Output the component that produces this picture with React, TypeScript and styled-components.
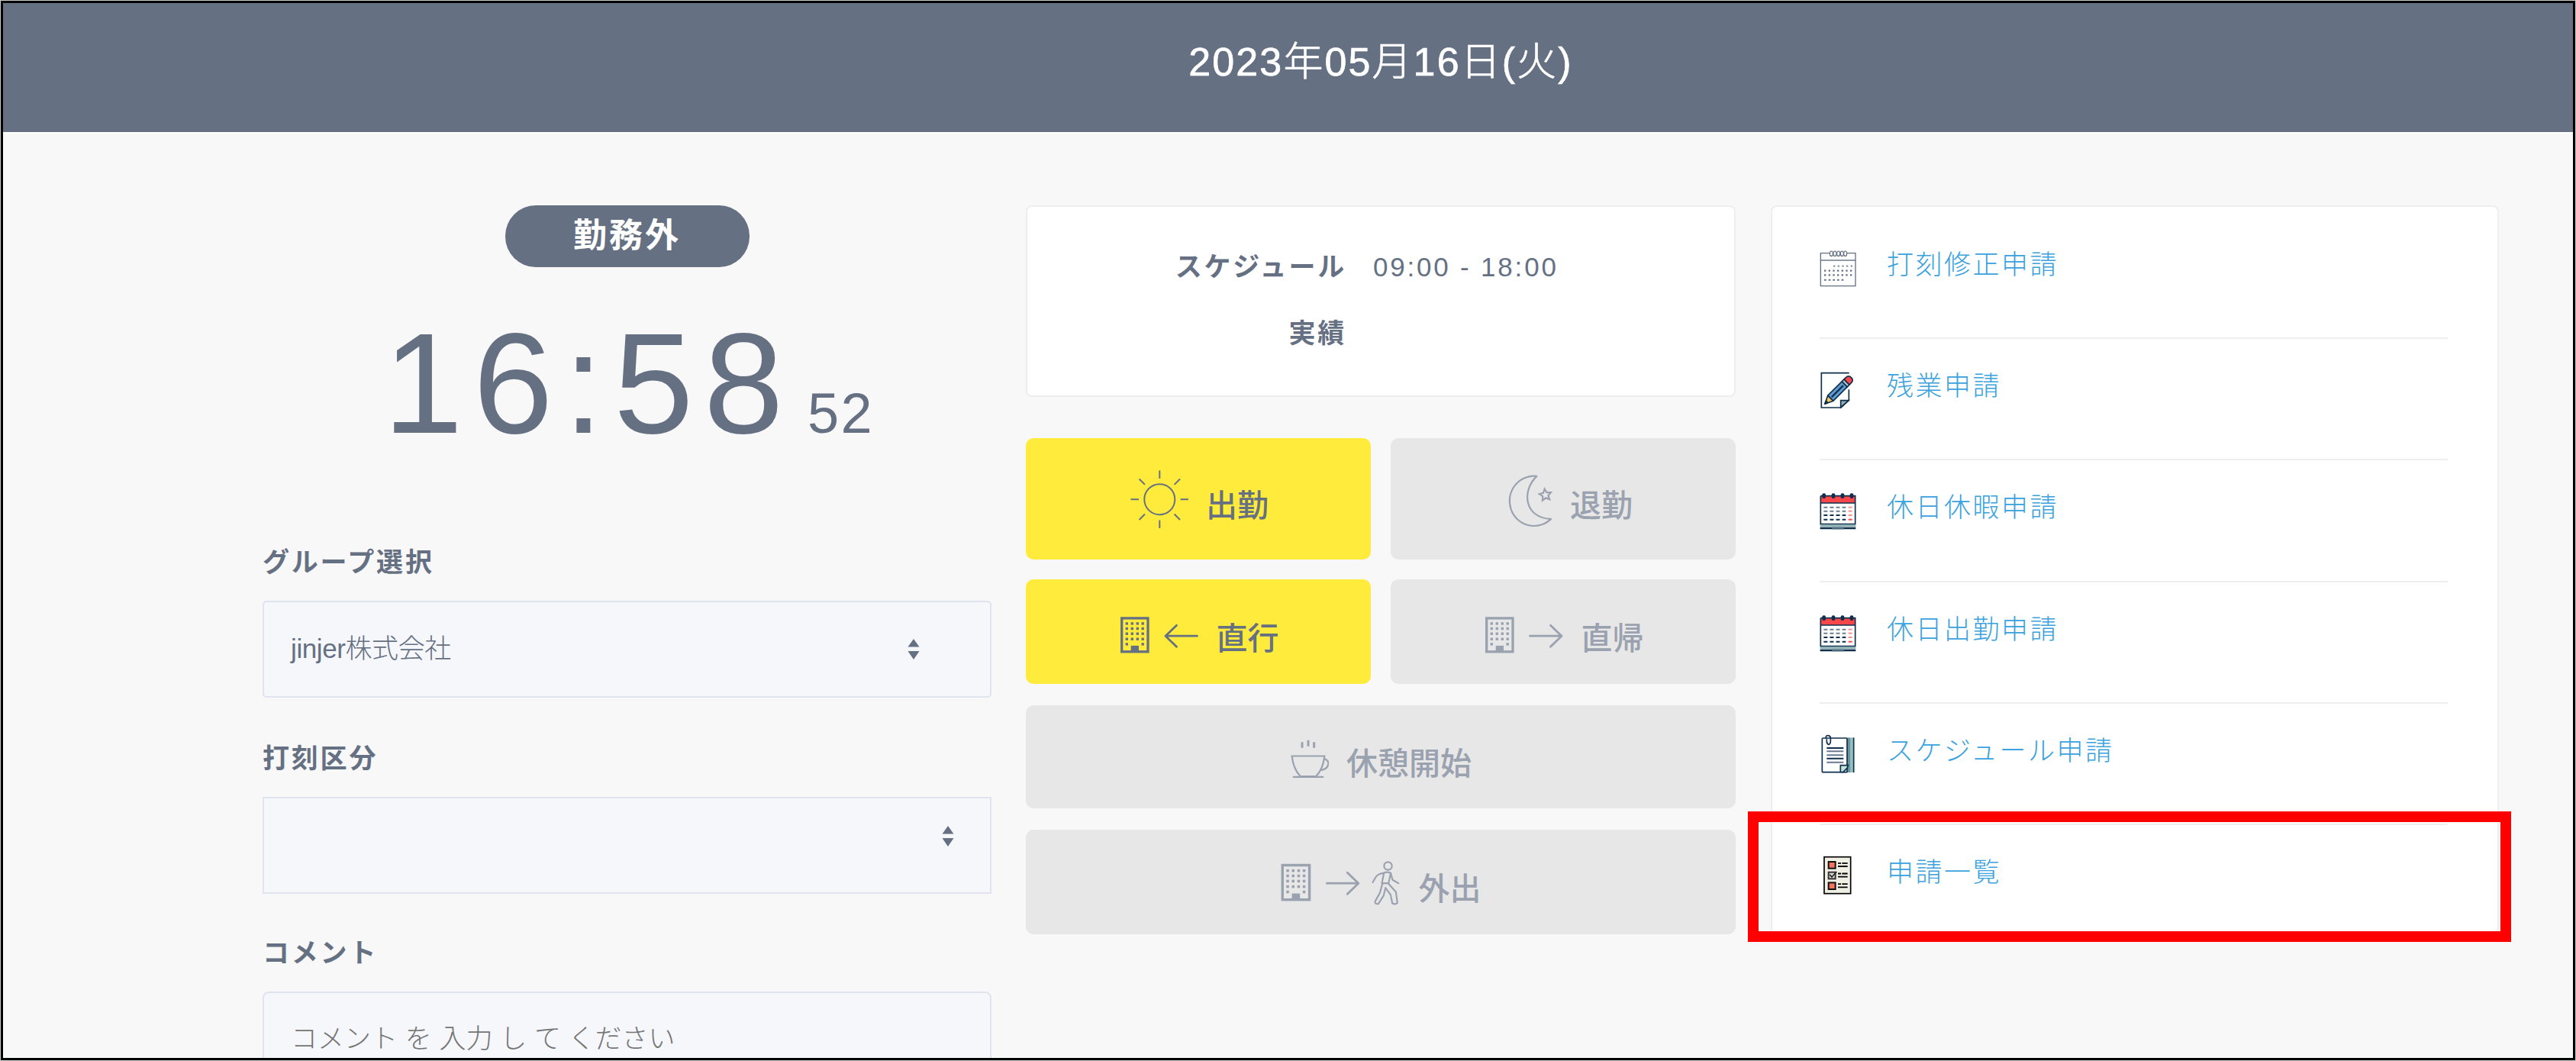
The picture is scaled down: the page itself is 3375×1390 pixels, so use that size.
import { ReactNode } from 'react';
import styled, { createGlobalStyle, css } from 'styled-components';

const colors = {
  slate: '#667083',
  muted: '#9aa1af',
  link: '#3aa2de',
  yellow: '#ffeb3b',
  disabled: '#e7e7e7',
  page: '#f8f8f8',
  line: '#eeeeee',
  field: '#f6f7fb',
  fieldLine: '#e0e4ef',
  navy: '#0f2f4c',
  red: '#f8474a',
  teal: '#8fb3b5',
};

const BuildingShape = ({ x, y, scale = 1 }: { x: number; y: number; scale?: number }) => {
  const cols = [8.3, 15.3, 22.3, 29.2];
  const rows = [8.7, 15.3, 22, 29, 35.7];

  return (
    <g transform={`translate(${x} ${y}) scale(${scale})`}>
      <rect x="1.7" y="1.7" width="34.3" height="43.9" fill="none" stroke="currentColor" strokeWidth="3.3" />
      {rows.map((row, r) =>
        cols.map((col, c) =>
          r === 4 && (c === 1 || c === 2) ? null : (
            <rect key={`${r}-${c}`} x={col - 1.7} y={row - 1.7} width="3.4" height="3.4" fill="currentColor" />
          ),
        ),
      )}
      <rect x="13.7" y="37.7" width="10.3" height="8" fill="currentColor" />
    </g>
  );
};

const ArrowShape = ({ x, y, left }: { x: number; y: number; left?: boolean }) => (
  <path
    transform={`translate(${x} ${y})`}
    d={left ? 'M43 0H1.5M16 -14L1.5 0L16 14' : 'M1 0H42.5M28 -14L42.5 0L28 14'}
    fill="none"
    stroke="currentColor"
    strokeWidth="2.8"
    strokeLinecap="round"
    strokeLinejoin="round"
  />
);

const SunIcon = () => (
  <ActionIcon width="79" height="80" viewBox="0 0 79 80">
    <g transform="translate(41.3 40.2)" fill="none" stroke="currentColor" strokeWidth="2">
      <circle r="20" />
      {[0, 45, 90, 135, 180, 225, 270, 315].map((deg) => (
        <path key={deg} d="M27.3 0H37.8" transform={`rotate(${deg})`} />
      ))}
    </g>
  </ActionIcon>
);

const MoonIcon = () => (
  <ActionIcon width="77" height="80" viewBox="0 0 77 80">
    <g transform="translate(20.7 8.2) scale(0.3333)" fill="none" stroke="currentColor" strokeWidth="6.5">
      <path d="M107 5A96 98 0 1 0 163 173C60 170 45 65 107 5Z" strokeLinejoin="round" />
      <path
        transform="translate(141 79) rotate(-8)"
        d="M0 -24L6.8 -9.3L22.8 -7.4L10.9 3.6L14.1 19.4L0 11.5L-14.1 19.4L-10.9 3.6L-22.8 -7.4L-6.8 -9.3Z"
      />
    </g>
  </ActionIcon>
);

const CommuteIcon = ({ left }: { left?: boolean }) => (
  <ActionIcon width="106" height="80" viewBox="0 0 106 80">
    <BuildingShape x={3} y={20.2} />
    <ArrowShape x={60.5} y={45.2} left={left} />
  </ActionIcon>
);

const CupIcon = () => (
  <ActionIcon width="51" height="80" viewBox="0 0 51 80">
    <g transform="translate(0 15.2) scale(0.3333)" fill="none" stroke="currentColor" strokeWidth="6.5">
      <path d="M8 70H136C132 108 118 134 102 150H42C26 134 12 108 8 70Z" />
      <path d="M14 152H130" strokeLinecap="round" />
      <path d="M134 81C160 84 158 122 118 126" />
      <path d="M48 15V38M72 8V32M95 15V38" strokeWidth="9" />
    </g>
  </ActionIcon>
);

const GoOutIcon = () => (
  <ActionIcon width="158" height="80" viewBox="0 0 158 80">
    <BuildingShape x={0.5} y={15.7} scale={1.03} />
    <ArrowShape x={59.3} y={41.2} />
    <g
      transform="translate(119.2 11.8) scale(0.3333)"
      fill="none"
      stroke="currentColor"
      strokeWidth="6.5"
      strokeLinecap="round"
      strokeLinejoin="round"
    >
      <circle cx="64" cy="20" r="15.5" />
      <path d="M48 47Q60 42 75 48L66 88H40Z" />
      <path d="M48 48Q26 50 17 62L4 84" />
      <path d="M75 50L82 75L105 88" />
      <path d="M42 90L32 126L13 160Q12 170 26 169L47 136L54 106L74 133L81 167Q92 174 101 165L95 122L66 90" />
    </g>
  </ActionIcon>
);

const CalendarIcon = () => (
  <MenuIcon viewBox="0 0 144 150">
    <g fill="none" stroke={colors.slate}>
      <path d="M40 11H4V140H141V11H106" strokeWidth="4" />
      <path d="M4 39H141" strokeWidth="6" opacity="0.7" />
      {[46, 60, 74, 88, 101].map((x) => (
        <ellipse key={x} cx={x} cy="13" rx="6" ry="10" strokeWidth="3.5" />
      ))}
      <path d="M54 62H130" strokeWidth="7" strokeDasharray="7 10" opacity="0.75" />
      <path d="M18 80H130M18 97H130" strokeWidth="7" strokeDasharray="7 10" />
      <path d="M18 116H96" strokeWidth="6" strokeDasharray="8 9" />
    </g>
  </MenuIcon>
);

const PencilIcon = () => (
  <MenuIcon viewBox="0 0 144 150">
    <path d="M116 5H7V141H84L115 112V70" fill="#fff" stroke={colors.navy} strokeWidth="5" />
    <path d="M83 140V113H114Z" fill={colors.teal} stroke={colors.navy} strokeWidth="5" />
    <g transform="translate(19 128) rotate(-45)" stroke={colors.navy} strokeWidth="5" strokeLinejoin="round">
      <path d="M2 0L34 -15V15Z" fill="#f6c75f" />
      <path d="M2 0L14 -5V5Z" fill={colors.navy} />
      <path d="M34 -15H112V15H34Z" fill="#5e9bd0" />
      <path d="M40 0H104" strokeWidth="7" />
      <path d="M112 -15H124V15H112Z" fill="#b9bec4" />
      <path d="M124 -15H134Q149 -15 149 0T134 15H124Z" fill={colors.red} />
    </g>
  </MenuIcon>
);

const HolidayIcon = () => (
  <MenuIcon viewBox="0 0 144 150">
    <path d="M3 11H141V39H3Z" fill={colors.red} />
    <path d="M4 11V122H140V11H4M4 39H140" fill="none" stroke={colors.navy} strokeWidth="5" />
    {[17, 54, 90, 126].map((x) => (
      <rect key={x} x={x - 7} y="1" width="14" height="20" rx="6" fill={colors.navy} />
    ))}
    {[56, 71, 87, 104].map((y) => (
      <g key={y} strokeWidth="6">
        <path d={`M16 ${y}H103`} stroke={y > 80 ? colors.navy : '#6d7f90'} strokeDasharray="15 9.3" />
        <path d={`M113 ${y}H128`} stroke={y > 100 ? colors.red : '#fb8f90'} />
      </g>
    ))}
    <rect x="2" y="124" width="140" height="9" fill={colors.teal} />
    <path d="M2 138H142" stroke={colors.navy} strokeWidth="8" />
    <path d="M48 138H96" stroke="#4c6c7e" strokeWidth="8" />
  </MenuIcon>
);

const DocumentIcon = () => (
  <MenuIcon viewBox="0 0 144 150">
    <rect x="108" y="4" width="14" height="137" fill="#71919a" />
    <rect x="122" y="4" width="10" height="137" fill="#8fc3c0" />
    <path d="M134 4V141" stroke={colors.navy} strokeWidth="5" />
    <rect x="10" y="6" width="98" height="134" rx="3" fill="#fff" stroke={colors.navy} strokeWidth="5" />
    <path d="M28 45H94M28 86H94" stroke={colors.navy} strokeWidth="6" />
    <path d="M28 58H94M28 73H94M28 101H94" stroke="#6d7990" strokeWidth="6" />
    <path d="M82 139V113H112L108 124L92 140Z" fill="#bfe3dd" stroke={colors.navy} strokeWidth="5" />
    <path d="M25 8V0Q27 -5 34 -4Q43 -3 43 6V20Q41 32 35 31Q28 29 28 18V10" fill="none" stroke={colors.navy} strokeWidth="5" />
  </MenuIcon>
);

const ChecklistIcon = () => (
  <MenuIcon viewBox="0 0 144 150">
    <rect x="18" y="-4" width="104" height="144" fill="#efefe3" stroke="#000" strokeWidth="5" />
    {[12, 53, 94].map((y, i) => (
      <g key={y}>
        <rect
          x="35"
          y={y + 3}
          width="27"
          height="26"
          fill={i === 1 ? '#d8d8d0' : '#f4745f'}
          stroke={i === 1 ? '#333' : '#111'}
          strokeWidth="6"
        />
        {i === 1 && <path d="M40 65L48 75L67 54" fill="none" stroke="#222" strokeWidth="5" />}
        <path d={`M72 ${y + 8.5}H84M88 ${y + 8.5}H110M72 ${y + 21}H110`} stroke="#000" strokeWidth="5.5" />
      </g>
    ))}
  </MenuIcon>
);

const SortArrows = () => (
  <svg width="16" height="27" viewBox="0 0 16 27" fill={colors.slate}>
    <path d="M8 0L15.5 10.5H0.5ZM8 27L15.5 16H0.5Z" />
  </svg>
);

interface PunchButtonProps {
  label: string;
  icon: ReactNode;
  active?: boolean;
}

const PunchButton = ({ label, icon, active }: PunchButtonProps) => (
  <Punch $active={active} disabled={!active}>
    {icon}
    <span>{label}</span>
  </Punch>
);

const menuItems = [
  { label: '打刻修正申請', icon: <CalendarIcon /> },
  { label: '残業申請', icon: <PencilIcon /> },
  { label: '休日休暇申請', icon: <HolidayIcon /> },
  { label: '休日出勤申請', icon: <HolidayIcon /> },
  { label: 'スケジュール申請', icon: <DocumentIcon /> },
  { label: '申請一覧', icon: <ChecklistIcon /> },
];

export default function App() {
  return (
    <Frame>
      <GlobalStyle />
      <Window>
        <Header>2023年05月16日(火)</Header>
        <Main>
          <ClockColumn>
            <StatusBadge>勤務外</StatusBadge>
            <Clock>
              <span>16:58</span>
              <small>52</small>
            </Clock>
            <Field>
              <FieldLabel>グループ選択</FieldLabel>
              <SelectBox $right={92} $radius={5}>
                <span>jinjer株式会社</span>
                <SortArrows />
              </SelectBox>
            </Field>
            <Field>
              <FieldLabel>打刻区分</FieldLabel>
              <SelectBox $right={47} $lift={24}>
                <span />
                <SortArrows />
              </SelectBox>
            </Field>
            <Field>
              <FieldLabel>コメント</FieldLabel>
              <CommentBox placeholder="コメント を 入力 し て ください" />
            </Field>
          </ClockColumn>

          <PunchColumn>
            <ScheduleCard>
              <dt>スケジュール</dt>
              <dd>09:00 - 18:00</dd>
              <dt>実績</dt>
              <dd />
            </ScheduleCard>
            <PunchRow $top={54} $height={159}>
              <PunchButton active label="出勤" icon={<SunIcon />} />
              <PunchButton label="退勤" icon={<MoonIcon />} />
            </PunchRow>
            <PunchRow $top={26} $height={137}>
              <PunchButton active label="直行" icon={<CommuteIcon left />} />
              <PunchButton label="直帰" icon={<CommuteIcon />} />
            </PunchRow>
            <PunchRow $top={28} $height={135}>
              <PunchButton label="休憩開始" icon={<CupIcon />} />
            </PunchRow>
            <PunchRow $top={28} $height={137}>
              <PunchButton label="外出" icon={<GoOutIcon />} />
            </PunchRow>
          </PunchColumn>

          <MenuCard>
            {menuItems.map((item) => (
              <MenuItem key={item.label}>
                {item.icon}
                <a>{item.label}</a>
              </MenuItem>
            ))}
          </MenuCard>
        </Main>
        <Highlight />
      </Window>
    </Frame>
  );
}

const GlobalStyle = createGlobalStyle`
  * {
    box-sizing: border-box;
  }

  body {
    margin: 0;
    overflow: hidden;
    color: ${colors.slate};
    font-family: 'Liberation Sans', 'Noto Sans CJK JP', sans-serif;
    font-size: 35px;
    line-height: 40px;
  }

  dl, dt, dd, ul {
    margin: 0;
    padding: 0;
  }
`;

const Frame = styled.div`
  width: 3375px;
  height: 1390px;
  padding: 1px;
  background: #c9cccb;
`;

const Window = styled.div`
  position: relative;
  height: 1388px;
  overflow: hidden;
  border: 3px solid #000;
  background: ${colors.page};
`;

const Header = styled.header`
  height: 171px;
  padding: 47px 0 0 243px;
  border-bottom: 2px solid #fff;
  background: ${colors.slate};
  color: #fff;
  font-size: 52px;
  font-weight: 300;
  line-height: 60px;
  letter-spacing: 2.1px;
  text-align: center;
  -webkit-text-stroke: 0.7px #fff;
`;

const Main = styled.main`
  display: flex;
  align-items: flex-start;
  padding: 94px 0 0 340px;
`;

const ClockColumn = styled.section`
  display: flex;
  flex-direction: column;
  width: 955px;
  margin-right: 45px;
`;

const StatusBadge = styled.div`
  align-self: center;
  width: 320px;
  height: 81px;
  border-radius: 40px;
  background: ${colors.slate};
  color: #fff;
  font-size: 44px;
  font-weight: 700;
  line-height: 80px;
  letter-spacing: 3px;
  text-align: center;
`;

const Clock = styled.div`
  display: flex;
  justify-content: center;
  align-items: baseline;
  gap: 18px;
  height: 188px;
  margin: 58px 0 60.5px;
  padding-left: 4px;
  font-size: 188px;
  line-height: 188px;
  letter-spacing: 13.5px;

  small {
    font-size: 74px;
    letter-spacing: 2.3px;
  }
`;

const Field = styled.div`
  margin-top: 60px;

  &:last-child {
    margin-top: 58px;
  }
`;

const FieldLabel = styled.div`
  height: 40px;
  margin-bottom: 30px;
  font-weight: 700;
  letter-spacing: 2.8px;
`;

const fieldBox = css`
  width: 100%;
  border: 2px solid ${colors.fieldLine};
  background: ${colors.field};
`;

const SelectBox = styled.div<{ $right: number; $lift?: number; $radius?: number }>`
  ${fieldBox}
  display: flex;
  align-items: center;
  justify-content: space-between;
  height: 127px;
  padding: 0 ${({ $right }) => $right}px ${({ $lift = 0 }) => $lift}px 35px;
  border-radius: ${({ $radius = 0 }) => $radius}px;
  font-weight: 300;
  letter-spacing: -0.4px;
`;

const CommentBox = styled.textarea`
  ${fieldBox}
  display: block;
  height: 200px;
  padding: 40px 35px;
  border-radius: 8px;
  font: inherit;
  font-weight: 300;
  resize: none;

  &::placeholder {
    color: #757575;
  }
`;

const PunchColumn = styled.section`
  width: 930px;
  margin-right: 46px;
`;

const ScheduleCard = styled.dl`
  display: grid;
  grid-template-columns: 418px 1fr;
  grid-auto-rows: 40px;
  gap: 47px 35px;
  height: 251px;
  padding-top: 59px;
  border: 2px solid ${colors.line};
  border-radius: 8px;
  background: #fff;
  letter-spacing: 2.8px;

  dt {
    font-weight: 700;
    text-align: right;
  }
`;

const PunchRow = styled.div<{ $top: number; $height: number }>`
  display: flex;
  gap: 26px;
  height: ${({ $height }) => $height}px;
  margin-top: ${({ $top }) => $top}px;
`;

const Punch = styled.button<{ $active?: boolean }>`
  display: flex;
  flex: 1;
  align-items: center;
  justify-content: center;
  gap: 23px;
  padding: 0;
  border: 0;
  border-radius: 10px;
  background: ${({ $active }) => ($active ? colors.yellow : colors.disabled)};
  color: ${({ $active }) => ($active ? colors.slate : colors.muted)};
  font-family: 'Noto Sans CJK JP', sans-serif;
  font-size: 41px;
  font-weight: 500;
  line-height: 50px;

  span {
    padding-top: 10px;
  }
`;

const ActionIcon = styled.svg`
  flex: none;
`;

const MenuCard = styled.ul`
  width: 954px;
  height: 958px;
  padding: 14px 65px 0 62px;
  border: 2px solid ${colors.line};
  border-radius: 8px;
  background: #fff;
  list-style: none;
`;

const MenuItem = styled.li`
  display: flex;
  gap: 40px;
  height: 159.2px;
  padding-top: 42px;
  border-bottom: 2px solid ${colors.line};

  &:last-child {
    border-bottom: 0;
  }

  a {
    color: ${colors.link};
    font-weight: 300;
    letter-spacing: 2.5px;
  }
`;

const MenuIcon = styled.svg`
  flex: none;
  width: 48px;
  height: 50px;
  margin-top: 1px;
  overflow: visible;
`;

// Marker drawn around the last menu entry
const Highlight = styled.div`
  position: absolute;
  top: 1059px;
  left: 2286px;
  width: 1000px;
  height: 171px;
  border: 14px solid #ff0000;
`;
